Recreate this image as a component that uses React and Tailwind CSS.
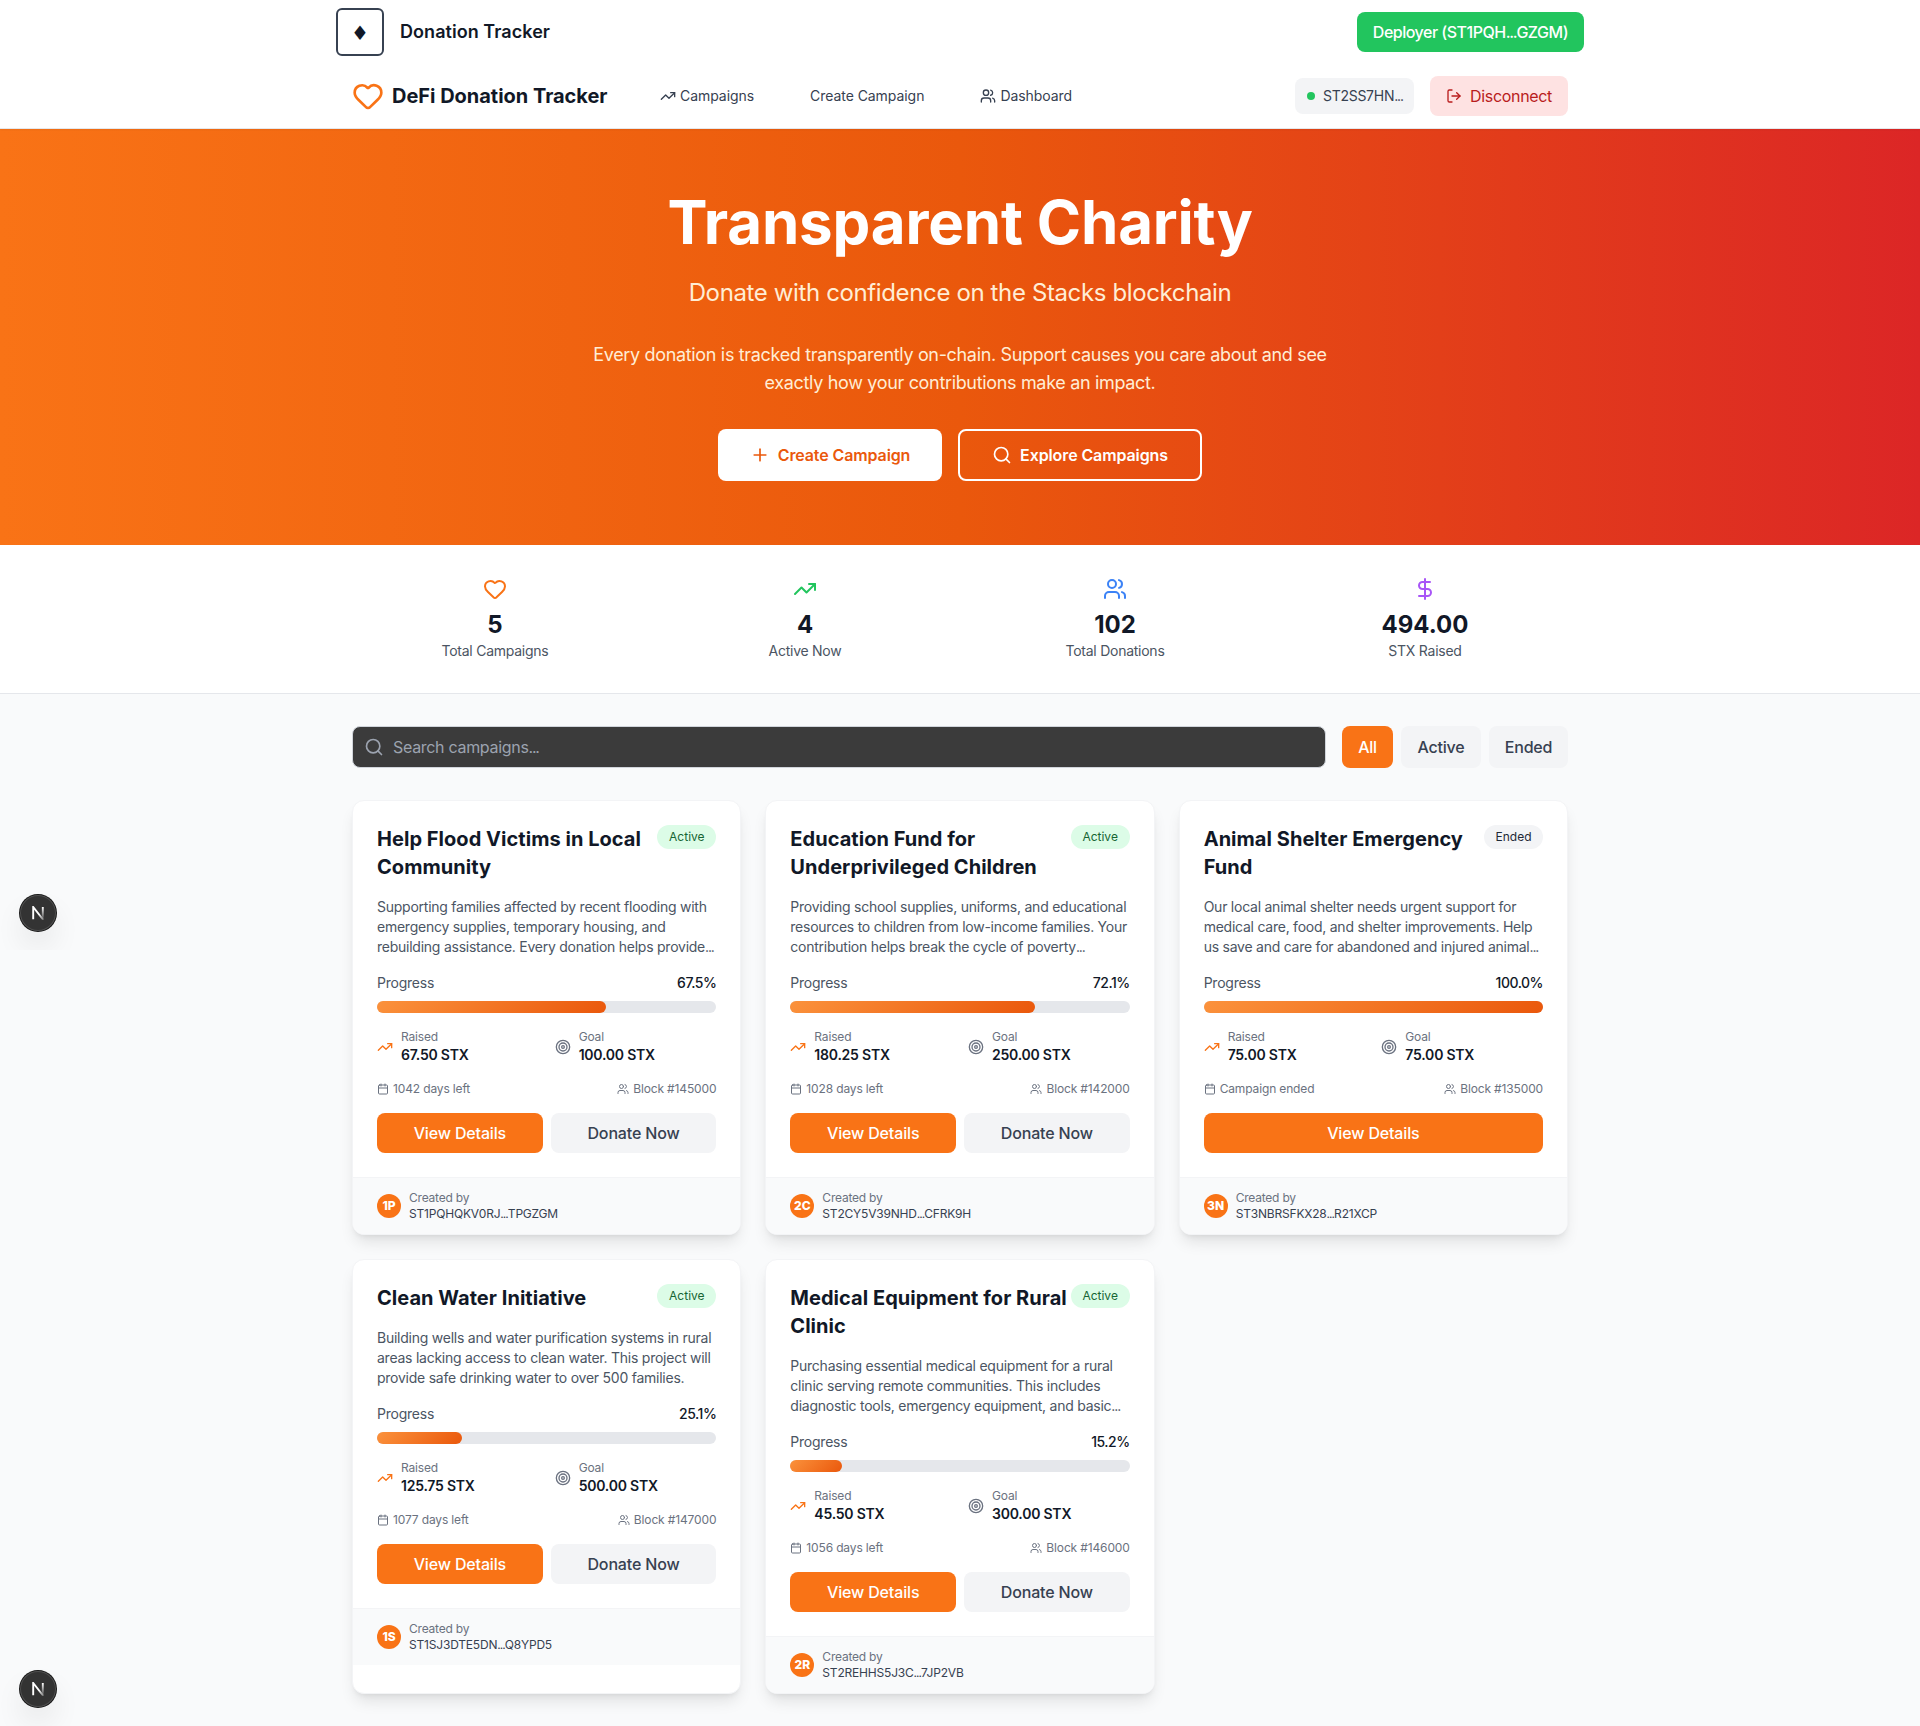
import React from "react";
import {
  Heart,
  TrendingUp,
  Users,
  DollarSign,
  Search,
  Plus,
  LogOut,
  Target,
  Calendar,
} from "lucide-react";

const campaigns = [
  {
    title: ["Help Flood Victims in Local", "Community"],
    active: true,
    text: [
      "Supporting families affected by recent flooding with",
      "emergency supplies, temporary housing, and",
      "rebuilding assistance. Every donation helps provide...",
    ],
    progress: 67.5,
    raised: "67.50",
    goal: "100.00",
    time: "1042 days left",
    block: "145000",
    initials: "1P",
    address: "ST1PQHQKV0RJ...TPGZGM",
  },
  {
    title: ["Education Fund for", "Underprivileged Children"],
    active: true,
    text: [
      "Providing school supplies, uniforms, and educational",
      "resources to children from low-income families. Your",
      "contribution helps break the cycle of poverty...",
    ],
    progress: 72.1,
    raised: "180.25",
    goal: "250.00",
    time: "1028 days left",
    block: "142000",
    initials: "2C",
    address: "ST2CY5V39NHD...CFRK9H",
  },
  {
    title: ["Animal Shelter Emergency", "Fund"],
    active: false,
    text: [
      "Our local animal shelter needs urgent support for",
      "medical care, food, and shelter improvements. Help",
      "us save and care for abandoned and injured animal...",
    ],
    progress: 100,
    raised: "75.00",
    goal: "75.00",
    time: "Campaign ended",
    block: "135000",
    initials: "3N",
    address: "ST3NBRSFKX28...R21XCP",
  },
  {
    title: ["Clean Water Initiative"],
    active: true,
    text: [
      "Building wells and water purification systems in rural",
      "areas lacking access to clean water. This project will",
      "provide safe drinking water to over 500 families.",
    ],
    progress: 25.1,
    raised: "125.75",
    goal: "500.00",
    time: "1077 days left",
    block: "147000",
    initials: "1S",
    address: "ST1SJ3DTE5DN...Q8YPD5",
  },
  {
    title: ["Medical Equipment for Rural", "Clinic"],
    active: true,
    text: [
      "Purchasing essential medical equipment for a rural",
      "clinic serving remote communities. This includes",
      "diagnostic tools, emergency equipment, and basic...",
    ],
    progress: 15.2,
    raised: "45.50",
    goal: "300.00",
    time: "1056 days left",
    block: "146000",
    initials: "2R",
    address: "ST2REHHS5J3C...7JP2VB",
  },
];

const stats = [
  { Icon: Heart, color: "text-[#f97316]", value: "5", label: "Total Campaigns" },
  { Icon: TrendingUp, color: "text-[#22c55e]", value: "4", label: "Active Now" },
  { Icon: Users, color: "text-[#3b82f6]", value: "102", label: "Total Donations" },
  { Icon: DollarSign, color: "text-[#a855f7]", value: "494.00", label: "STX Raised" },
];

// Sets the dots of an ellipsis closer together than the text around them.
function Ellipsized({ children }) {
  const [before, after] = children.split("...");
  if (after === undefined) return children;
  return (
    <>
      {before}
      <span className="tracking-[-0.08em]">...</span>
      {after}
    </>
  );
}

function TopBar() {
  return (
    <div className="h-16 bg-white">
      <div className="mx-auto flex h-full w-[1248px] items-center justify-between">
        <div className="flex items-center gap-4">
          <div className="flex size-12 items-center justify-center rounded-md border-2 border-[#374151] pt-0.5 font-['DejaVu_Sans',sans-serif] text-xl text-[#111827]">
            ♦
          </div>
          <span className="text-lg font-semibold tracking-[0.003em] text-[#111827]">
            Donation Tracker
          </span>
        </div>
        <button className="h-10 w-[227px] rounded-lg bg-[#22c55e] text-base font-medium tracking-[-0.031em] whitespace-nowrap text-white">
          <Ellipsized>Deployer (ST1PQH...GZGM)</Ellipsized>
        </button>
      </div>
    </div>
  );
}

function NavBar() {
  return (
    <nav className="relative z-10 border-b border-[#e5e7eb] bg-white shadow-[0_1px_2px_0_rgba(0,0,0,0.05)]">
      <div className="mx-auto flex h-16 w-[1216px] items-center justify-between">
        <div className="flex items-center">
          <div className="flex w-[296px] items-center gap-2">
            <Heart className="size-8 text-[#f97316]" />
            <span className="text-xl font-bold tracking-[-0.001em] whitespace-nowrap text-[#111827]">
              DeFi Donation Tracker
            </span>
          </div>
          <div className="flex items-center gap-8 text-sm tracking-[-0.004em] text-[#374151]">
            <a className="flex items-center gap-1 px-3">
              <TrendingUp className="size-4" />
              Campaigns
            </a>
            <a className="px-3">Create Campaign</a>
            <a className="flex items-center gap-1 px-3">
              <Users className="size-4" />
              Dashboard
            </a>
          </div>
        </div>
        <div className="flex items-center gap-4">
          <div className="flex h-9 w-[119px] items-center gap-2 rounded-lg bg-[#f3f4f6] px-3">
            <span className="size-2 shrink-0 rounded-full bg-[#22c55e]" />
            <span className="text-sm tracking-[-0.02em] text-[#374151]">
              <Ellipsized>ST2SS7HN...</Ellipsized>
            </span>
          </div>
          <button className="flex h-10 w-[138px] items-center gap-2 rounded-lg bg-[#fee2e2] px-4 text-base tracking-[-0.02em] text-[#b91c1c]">
            <LogOut className="size-4 shrink-0" />
            Disconnect
          </button>
        </div>
      </div>
    </nav>
  );
}

function Hero() {
  return (
    <section className="bg-[linear-gradient(to_right,#f97316,#ea580c,#dc2626)] pt-[63px] pb-16 text-center">
      <h1 className="mb-[25px] text-[60px] leading-none font-bold tracking-[-0.003em] text-white">
        Transparent Charity
      </h1>
      <p className="mb-8 text-2xl leading-8 tracking-[-0.0155em] text-[#ffedd5]">
        Donate with confidence on the Stacks blockchain
      </p>
      <p className="mb-8 text-lg leading-7 tracking-[-0.0185em] text-[#ffedd5]">
        Every donation is tracked transparently on-chain. Support causes you care about and see
        <br />
        exactly how your contributions make an impact.
      </p>
      <div className="flex justify-center gap-4 text-base font-semibold tracking-[-0.007em]">
        <button className="flex h-[52px] w-[224px] items-center justify-center gap-2 rounded-lg bg-white text-[#ea580c]">
          <Plus className="size-5" />
          Create Campaign
        </button>
        <button className="flex h-[52px] w-[244px] items-center justify-center gap-2 rounded-lg border-2 border-white text-white">
          <Search className="size-5" />
          Explore Campaigns
        </button>
      </div>
    </section>
  );
}

function Stats() {
  return (
    <section className="border-b border-[#e5e7eb] bg-white py-8">
      <div className="mx-auto grid w-[1216px] grid-cols-4 gap-6">
        {stats.map(({ Icon, color, value, label }) => (
          <div key={label} className="flex flex-col items-center">
            <Icon className={`mb-2 size-6 ${color}`} />
            <div className="text-2xl leading-8 font-bold text-[#111827]">{value}</div>
            <div className="text-sm tracking-[-0.018em] text-[#4b5563]">{label}</div>
          </div>
        ))}
      </div>
    </section>
  );
}

function Filters() {
  return (
    <div className="mb-8 flex h-[42px] gap-4">
      <div className="flex flex-1 items-center gap-[9px] rounded-lg border border-[#d1d5db] bg-[#3b3b3b] px-[11px] text-[#9ca3af]">
        <Search className="size-5" />
        <span className="text-base tracking-[-0.019em]">
          <Ellipsized>Search campaigns...</Ellipsized>
        </span>
      </div>
      <div className="flex gap-2 text-base font-medium tracking-[-0.014em]">
        <button className="w-[51px] rounded-lg bg-[#f97316] text-white">All</button>
        <button className="w-[80px] rounded-lg bg-[#f3f4f6] text-[#374151]">Active</button>
        <button className="w-[79px] rounded-lg bg-[#f3f4f6] text-[#374151]">Ended</button>
      </div>
    </div>
  );
}

function Amount({ icon, label, value }) {
  return (
    <div className="flex items-center gap-2">
      {icon}
      <div>
        <div className="text-xs tracking-[-0.014em] text-[#6b7280]">{label}</div>
        <div className="text-sm font-semibold tracking-[-0.016em] text-[#111827]">{value} STX</div>
      </div>
    </div>
  );
}

function CampaignCard({ c }) {
  return (
    <article className="overflow-hidden rounded-xl border border-[#f3f4f6] bg-white shadow-[0_10px_15px_-3px_rgba(0,0,0,0.1),0_4px_6px_-4px_rgba(0,0,0,0.1)]">
      <div className="p-6">
        <div className="mb-4 flex items-start justify-between">
          <h3 className="text-xl leading-7 font-bold tracking-[0.002em] whitespace-nowrap text-[#111827]">
            {c.title.map((line) => (
              <span key={line} className="block">
                {line}
              </span>
            ))}
          </h3>
          <span
            className={`w-[59px] rounded-full py-1 text-center text-xs ${
              c.active ? "bg-[#dcfce7] text-[#166534]" : "bg-[#f3f4f6] text-[#1f2937]"
            }`}
          >
            {c.active ? "Active" : "Ended"}
          </span>
        </div>
        <p className="mb-4 text-sm leading-5 tracking-[-0.0175em] whitespace-nowrap text-[#4b5563]">
          {c.text.map((line) => (
            <span key={line} className="block">
              <Ellipsized>{line}</Ellipsized>
            </span>
          ))}
        </p>
        <div className="mb-2 flex justify-between text-sm tracking-[-0.017em]">
          <span className="text-[#4b5563]">Progress</span>
          <span className="font-medium tracking-[-0.035em] text-[#111827]">
            {c.progress.toFixed(1)}%
          </span>
        </div>
        <div className="mb-4 h-3 rounded-full bg-[#e5e7eb]">
          <div
            className="h-3 rounded-full bg-[linear-gradient(135deg,#fb923c,#ea580c)]"
            style={{ width: `${c.progress}%` }}
          />
        </div>
        <div className="mb-4 grid grid-cols-2 gap-4">
          <Amount
            icon={<TrendingUp className="size-4 text-[#f97316]" />}
            label="Raised"
            value={c.raised}
          />
          <Amount
            icon={<Target className="size-4 text-[#6b7280]" />}
            label="Goal"
            value={c.goal}
          />
        </div>
        <div className="mb-4 flex justify-between text-xs tracking-[-0.012em] text-[#6b7280]">
          <span className="flex items-center gap-1">
            <Calendar className="size-3" />
            {c.time}
          </span>
          <span className="flex items-center gap-1">
            <Users className="size-3" />
            Block #{c.block}
          </span>
        </div>
        <div className="flex gap-2 text-base font-medium tracking-[-0.01em]">
          <button className="h-10 flex-1 rounded-lg bg-[#f97316] text-white">View Details</button>
          {c.active && (
            <button className="h-10 flex-1 rounded-lg bg-[#f3f4f6] text-[#374151]">
              Donate Now
            </button>
          )}
        </div>
      </div>
      <div className="flex items-center gap-2 border-t border-[#f3f4f6] bg-[#f9fafb] px-6 py-3 text-xs">
        <div className="flex size-6 items-center justify-center rounded-full bg-[#f97316] font-extrabold text-white">
          {c.initials}
        </div>
        <div>
          <div className="tracking-[-0.018em] text-[#6b7280]">Created by</div>
          <div className="tracking-[-0.016em] text-[#374151]">
            <Ellipsized>{c.address}</Ellipsized>
          </div>
        </div>
      </div>
    </article>
  );
}

function DevBadge({ id }) {
  return (
    <div className="flex size-9 items-center justify-center rounded-full bg-[#333333] shadow-[0_0_0_1px_#171717,inset_0_0_0_1px_rgba(255,255,255,0.14),0_16px_32px_-8px_rgba(0,0,0,0.24)]">
      <svg width="14" height="14" viewBox="0 0 14 14" fill="none">
        <defs>
          <linearGradient id={`${id}-a`} x1="8" y1="8.5" x2="12.6" y2="14.5" gradientUnits="userSpaceOnUse">
            <stop stopColor="white" />
            <stop offset="0.75" stopColor="white" stopOpacity="0.4" />
            <stop offset="1" stopColor="white" stopOpacity="0.1" />
          </linearGradient>
          <linearGradient id={`${id}-b`} x1="11.8" y1="1" x2="11.8" y2="13" gradientUnits="userSpaceOnUse">
            <stop stopColor="white" />
            <stop offset="1" stopColor="white" stopOpacity="0.1" />
          </linearGradient>
        </defs>
        <path d="M12.4 14L2.2 1V13.2" stroke={`url(#${id}-a)`} strokeWidth="1.9" />
        <path d="M11.8 1V13.2" stroke={`url(#${id}-b)`} strokeWidth="1.9" />
      </svg>
    </div>
  );
}

export default function App() {
  return (
    <div className="relative h-[1726px] overflow-hidden bg-[#f9fafb] font-['Inter',sans-serif] antialiased">
      <TopBar />
      <NavBar />
      <Hero />
      <Stats />
      <main className="mx-auto w-[1216px] py-8">
        <Filters />
        <div className="grid grid-cols-3 gap-6">
          {campaigns.map((c) => (
            <CampaignCard key={c.address} c={c} />
          ))}
        </div>
      </main>
      <div className="absolute top-[830px] left-0 flex h-[120px] w-[120px] items-end overflow-hidden pb-[19px] pl-5">
        <DevBadge id="upper" />
      </div>
      <div className="absolute bottom-0 left-0 flex h-[120px] w-[120px] items-end overflow-hidden pb-[19px] pl-5">
        <DevBadge id="lower" />
      </div>
    </div>
  );
}
